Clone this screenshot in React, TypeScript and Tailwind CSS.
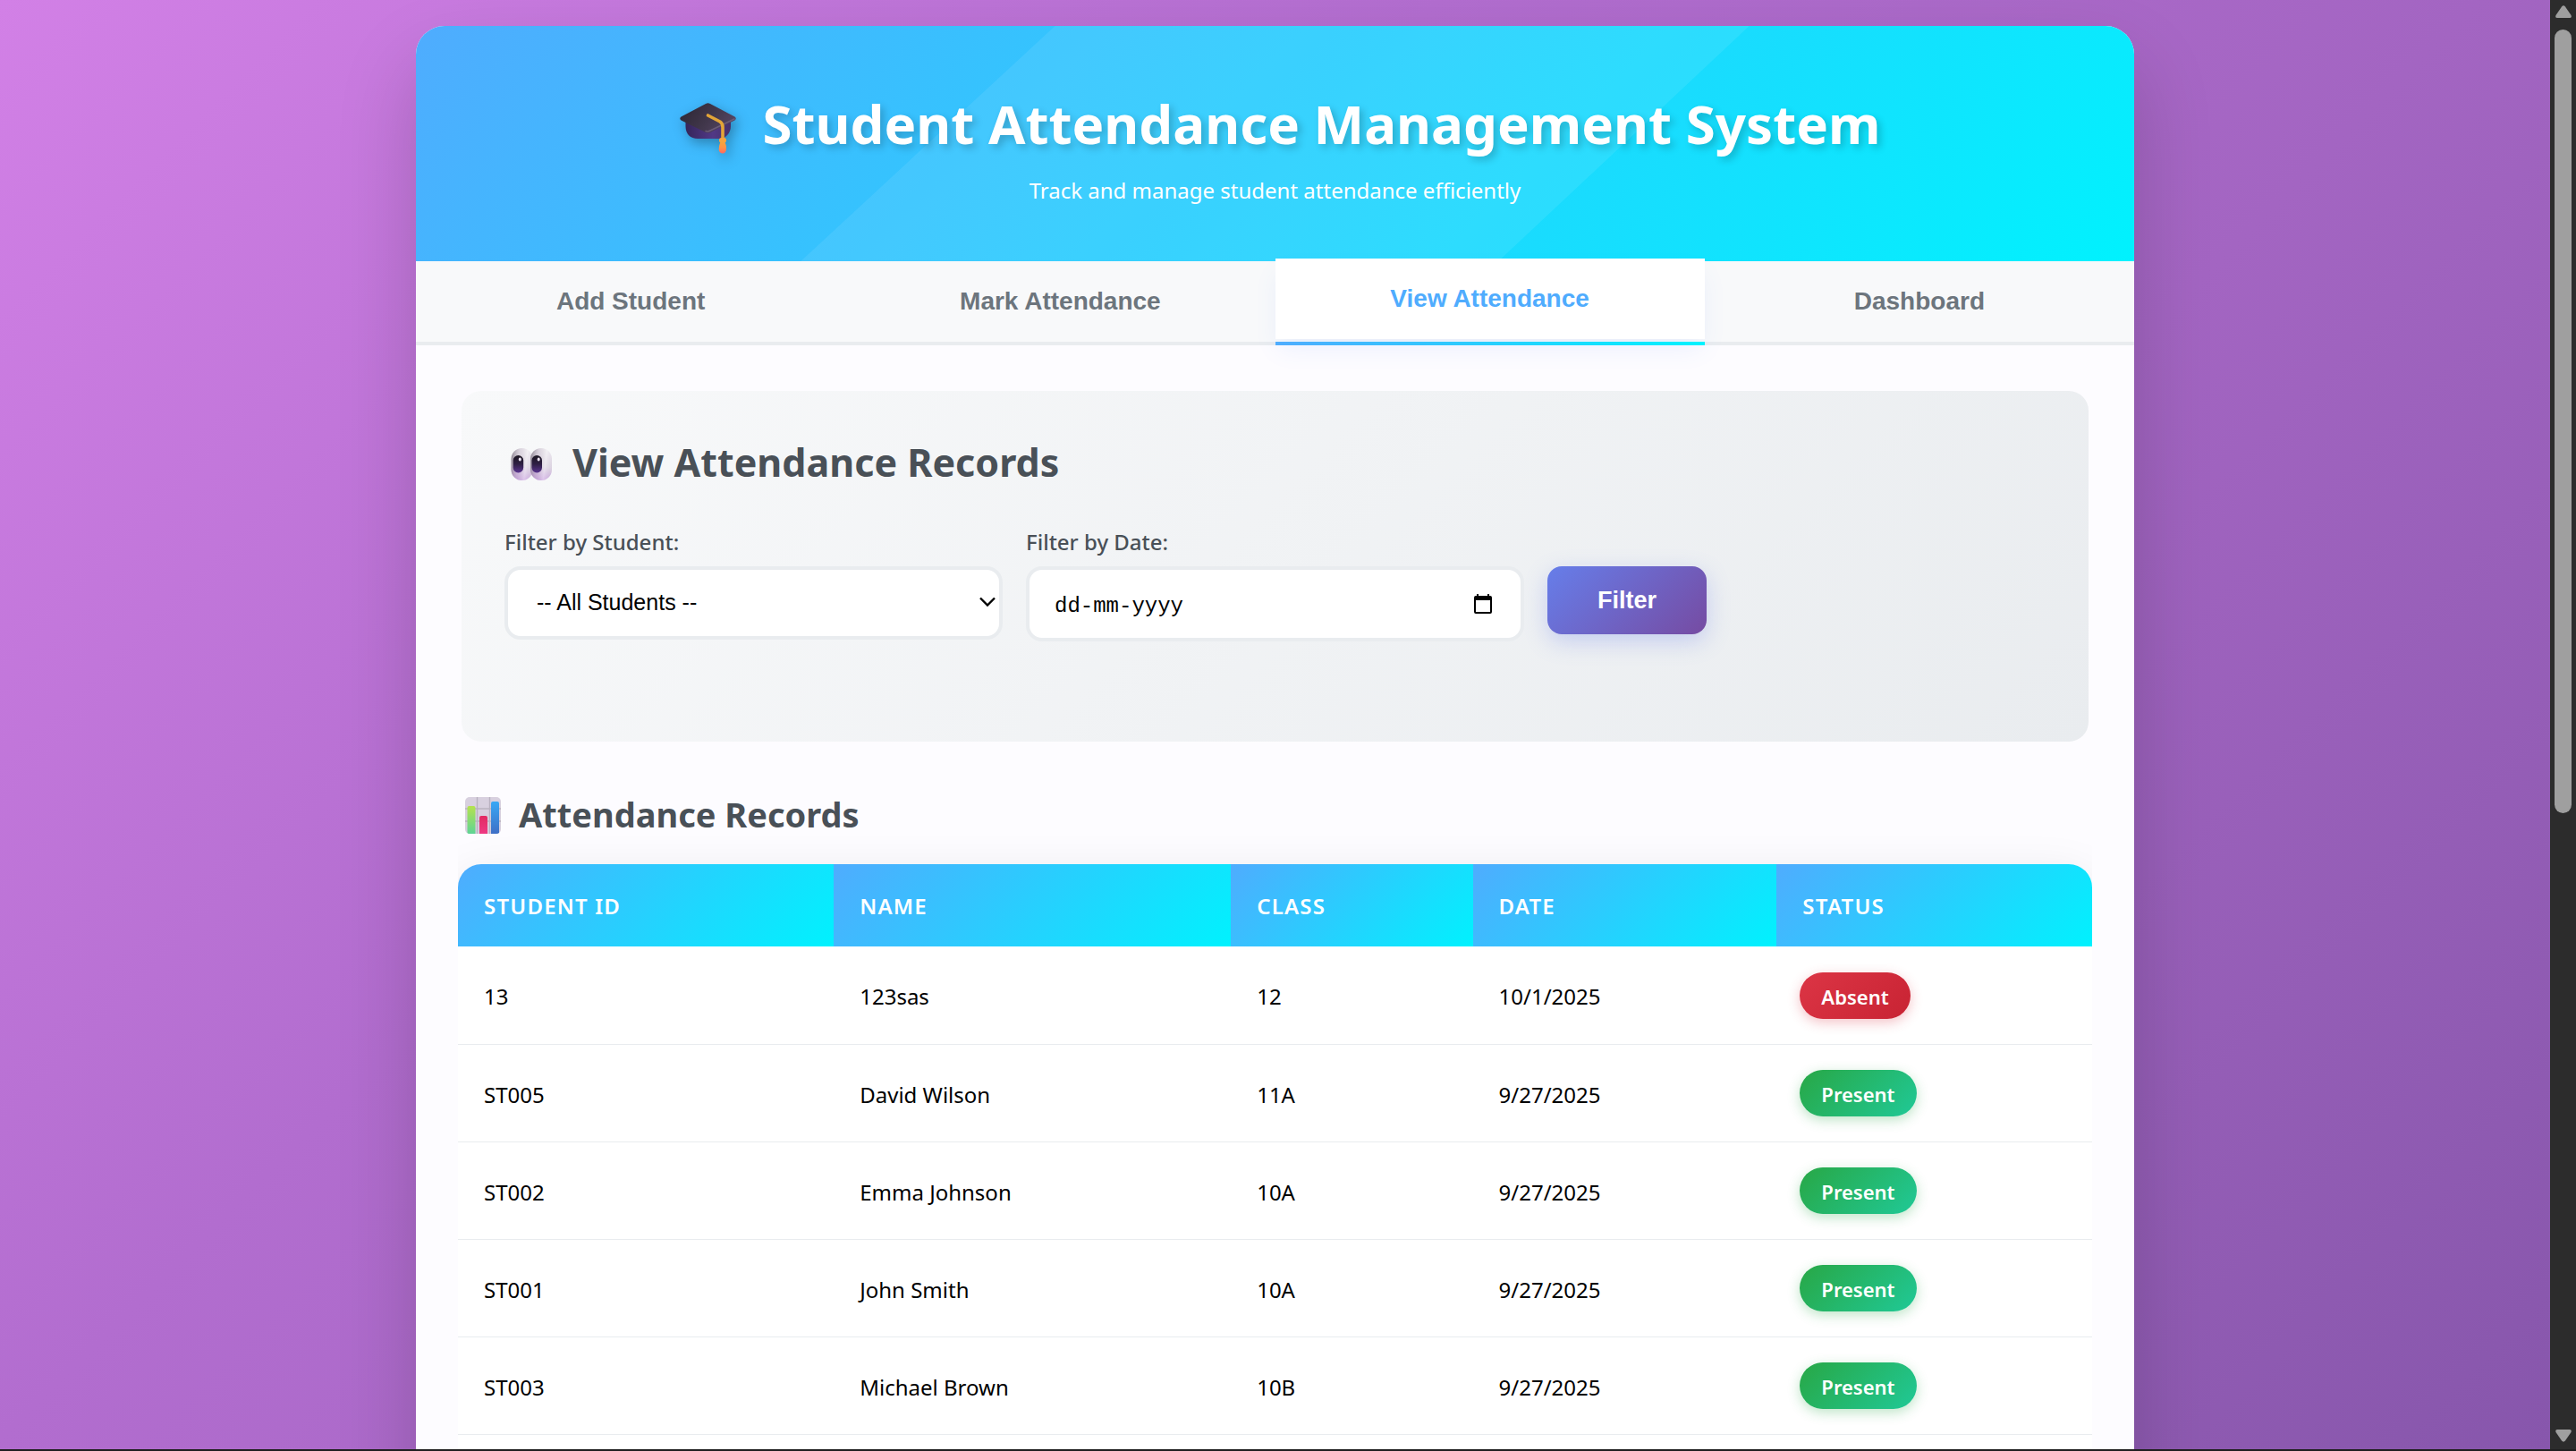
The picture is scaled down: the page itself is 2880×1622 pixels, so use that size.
import React from "react";

type AttendanceRecord = {
  id: string;
  name: string;
  className: string;
  date: string;
  status: "Absent" | "Present";
};

const records: AttendanceRecord[] = [
  { id: "13", name: "123sas", className: "12", date: "10/1/2025", status: "Absent" },
  { id: "ST005", name: "David Wilson", className: "11A", date: "9/27/2025", status: "Present" },
  { id: "ST002", name: "Emma Johnson", className: "10A", date: "9/27/2025", status: "Present" },
  { id: "ST001", name: "John Smith", className: "10A", date: "9/27/2025", status: "Present" },
  { id: "ST003", name: "Michael Brown", className: "10B", date: "9/27/2025", status: "Present" },
];

const tabs = ["Add Student", "Mark Attendance", "View Attendance", "Dashboard"];

const columns = [
  { label: "Student ID", width: "w-[23%]" },
  { label: "Name", width: "w-[24.3%]" },
  { label: "Class", width: "w-[14.8%]" },
  { label: "Date", width: "w-[18.6%]" },
  { label: "Status", width: "w-[19.3%]" },
];

function GraduationCap() {
  return (
    <svg viewBox="-2 0 80 72" className="h-[72px] w-20 shrink-0 drop-shadow-[3px_5px_7px_rgba(0,0,0,0.3)]" aria-hidden="true">
      <defs>
        <linearGradient id="capTop" x1="0" y1="0.3" x2="1" y2="0.7">
          <stop offset="0" stopColor="#2f2836" />
          <stop offset="0.5" stopColor="#40364a" />
          <stop offset="1" stopColor="#564664" />
        </linearGradient>
        <linearGradient id="capBase" x1="0" y1="0" x2="1" y2="0">
          <stop offset="0" stopColor="#35265a" />
          <stop offset="0.6" stopColor="#513886" />
          <stop offset="1" stopColor="#463069" />
        </linearGradient>
        <linearGradient id="tassel" x1="0" y1="0" x2="0" y2="1">
          <stop offset="0" stopColor="#f5a63c" />
          <stop offset="0.5" stopColor="#ff9245" />
          <stop offset="1" stopColor="#ff6a63" />
        </linearGradient>
      </defs>
      <path d="M16.5 30V39C16.5 48 22 53 30 53H54C61 53 67 47 67 39V30Z" fill="url(#capBase)" />
      <path d="M11.5 28.5L39 14Q41.500 12.500 44 14L71.500 28.500Q74 30.500 71.500 32.500L45 45.500Q41.500 47.500 38 45.500L11.500 32.500Q9 30.500 11.500 28.500Z" fill="url(#capTop)" />
      <path d="M39 44.500Q41.500 45.500 44 44L71 31" fill="none" stroke="#6b5b78" strokeWidth="1.500" strokeLinecap="round" />
      <path d="M41.500 27L55 34Q58 36 58 40V56" fill="none" stroke="#e3a537" strokeWidth="3.600" strokeLinecap="round" strokeLinejoin="round" />
      <rect x="54" y="52" width="8" height="5.500" rx="2.500" fill="#f6a43f" />
      <path d="M55.500 56.500H60.500Q62.500 61 62 65.500Q61 69.500 58 69.500Q54.500 69.500 53.700 65.500Q53.500 61 55.500 56.500Z" fill="url(#tassel)" />
    </svg>
  );
}

function Eyes() {
  return (
    <svg viewBox="0 0 60 60" className="size-[60px] shrink-0" aria-hidden="true">
      <defs>
        <linearGradient id="eyeWhite" x1="0.6" y1="0" x2="0.45" y2="1">
          <stop offset="0" stopColor="#ece8ee" />
          <stop offset="0.55" stopColor="#ddd5e2" />
          <stop offset="1" stopColor="#c59add" />
        </linearGradient>
        <linearGradient id="eyeShade" x1="0" y1="0.3" x2="1" y2="0.5">
          <stop offset="0" stopColor="#5c5360" stopOpacity="0.6" />
          <stop offset="0.35" stopColor="#b9aebf" stopOpacity="0.3" />
          <stop offset="0.7" stopColor="#ffffff" stopOpacity="0.4" />
          <stop offset="1" stopColor="#d5cbdc" stopOpacity="0.2" />
        </linearGradient>
        <linearGradient id="pupil" x1="0" y1="0" x2="0" y2="1">
          <stop offset="0" stopColor="#1c1722" />
          <stop offset="0.5" stopColor="#2e1f43" />
          <stop offset="1" stopColor="#5b3590" />
        </linearGradient>
      </defs>
      <rect x="7.500" y="14" width="24" height="36" rx="12" fill="url(#eyeWhite)" />
      <rect x="7.500" y="14" width="24" height="36" rx="12" fill="url(#eyeShade)" />
      <rect x="29" y="14" width="24" height="36" rx="12" fill="url(#eyeWhite)" />
      <rect x="29" y="14" width="24" height="36" rx="12" fill="url(#eyeShade)" />
      <rect x="9.700" y="22" width="11.500" height="19.500" rx="5.700" fill="url(#pupil)" />
      <rect x="30.500" y="22" width="11.500" height="19.500" rx="5.700" fill="url(#pupil)" />
      <ellipse cx="17.300" cy="26.500" rx="1.500" ry="2" fill="#ece4f2" />
      <ellipse cx="38.200" cy="26.500" rx="1.500" ry="2" fill="#ece4f2" />
    </svg>
  );
}

function BarChart() {
  return (
    <svg viewBox="0 0 48 48" className="size-12 shrink-0" aria-hidden="true">
      <defs>
        <linearGradient id="barGreen" x1="0" y1="0" x2="0" y2="1">
          <stop offset="0" stopColor="#b5e24e" />
          <stop offset="1" stopColor="#5ed495" />
        </linearGradient>
        <linearGradient id="barPink" x1="0" y1="0" x2="0" y2="1">
          <stop offset="0" stopColor="#e22a62" />
          <stop offset="1" stopColor="#ee3a84" />
        </linearGradient>
        <linearGradient id="barBlue" x1="0" y1="0" x2="0" y2="1">
          <stop offset="0" stopColor="#37a8f5" />
          <stop offset="1" stopColor="#3f6fc6" />
        </linearGradient>
      </defs>
      <rect x="4" y="5" width="40" height="41" rx="5" fill="#d8d0df" />
      <path d="M17.500 5V46M31.500 5V46M4 18H44M4 32H44" stroke="#b9b2c0" strokeWidth="1.400" />
      <path d="M6.500 46V17Q6.500 15 8.500 15H13.500Q15.500 15 15.500 17V46H9Q6.500 46 6.500 45Z" fill="url(#barGreen)" />
      <path d="M20 46V28Q20 26 22 26H27Q29 26 29 28V46Z" fill="url(#barPink)" />
      <path d="M33 46V12Q33 10 35 10H40Q42 10 42 12V45Q41 46 39 46Z" fill="url(#barBlue)" />
    </svg>
  );
}

function StatusBadge({ status }: { status: AttendanceRecord["status"] }) {
  const tone =
    status === "Absent"
      ? "bg-[linear-gradient(135deg,#dc3545,#c82333)] shadow-[0_4px_14px_rgba(220,53,69,0.3)]"
      : "bg-[linear-gradient(135deg,#28a745,#20c997)] shadow-[0_4px_14px_rgba(40,167,69,0.3)]";
  return (
    <span className={`inline-block rounded-full px-6 pt-3 pb-2.5 align-middle text-[22px] leading-[30px] font-semibold text-white ${tone}`}>
      {status}
    </span>
  );
}

function Header() {
  return (
    <header className="relative rounded-t-[32px] bg-[linear-gradient(135deg,#4facfe_0%,#00f2fe_100%)] pt-16 pb-[59px] text-center text-white">
      <div className="absolute inset-0 bg-white/8 [clip-path:polygon(37.2%_0,77.6%_0,63%_100%,22.4%_100%)]" />
      <div className="relative flex items-center justify-center gap-6">
        <GraduationCap />
        <h1 className="text-[60px] leading-[90px] font-bold [text-shadow:4px_4px_8px_rgba(0,0,0,0.2)]">
          Student Attendance Management System
        </h1>
      </div>
      <p className="relative mt-2.5 text-2xl leading-10">Track and manage student attendance efficiently</p>
    </header>
  );
}

function Tabs() {
  return (
    <nav className="relative grid grid-cols-4 border-b-4 border-[#e9ecef] bg-[#f8f9fa] font-['Liberation_Sans',Arial,sans-serif] text-[28px] font-bold">
      {tabs.map((tab) =>
        tab === "View Attendance" ? (
          <button
            key={tab}
            type="button"
            aria-current="page"
            className="relative h-[90px] -translate-y-[3px] bg-white text-[#4facfe] shadow-[0_14px_26px_-4px_rgba(79,130,254,0.1)]"
          >
            {tab}
            <span className="absolute inset-x-0 -bottom-[7px] h-1 bg-[linear-gradient(90deg,#4facfe,#00f2fe)]" />
          </button>
        ) : (
          <button key={tab} type="button" className="h-[90px] text-[#6c757d]">
            {tab}
          </button>
        )
      )}
    </nav>
  );
}

function FilterPanel() {
  return (
    <section className="rounded-[22px] bg-[linear-gradient(135deg,#f8f9fa_0%,#e9ecef_100%)] px-12 pt-[50px] pb-28 text-[#495057]">
      <h2 className="flex items-center gap-4 text-[43px] leading-[60px] font-bold">
        <Eyes />
        View Attendance Records
      </h2>
      <form className="mt-10 grid grid-cols-3 items-start gap-[26px]">
        <div>
          <label htmlFor="student" className="block text-2xl leading-[38px] font-medium">
            Filter by Student:
          </label>
          <div className="relative mt-2">
            <select
              id="student"
              className="block h-[82px] w-full appearance-none rounded-[18px] border-4 border-[#e9ecef] bg-white pr-10 pl-8 font-['Liberation_Sans',Arial,sans-serif] text-[25px] text-black"
            >
              <option>-- All Students --</option>
            </select>
            <svg viewBox="0 0 18 12" className="pointer-events-none absolute top-[34px] right-2 h-3 w-[18px]" aria-hidden="true">
              <path d="M1 1.500L9 9.500L17 1.500" fill="none" stroke="#000" strokeWidth="2.400" />
            </svg>
          </div>
        </div>
        <div>
          <label htmlFor="date" className="block text-2xl leading-[38px] font-medium">
            Filter by Date:
          </label>
          <div className="relative mt-2">
            <input
              id="date"
              type="text"
              placeholder="dd-mm-yyyy"
              className="block h-[84px] w-full rounded-[18px] border-4 border-[#e9ecef] bg-white pt-1 pr-20 pl-7 font-['Liberation_Mono',monospace] text-2xl text-black placeholder:text-black"
            />
            <svg viewBox="0 0 20 22" className="pointer-events-none absolute top-[31px] right-9 h-[22px] w-5" aria-hidden="true">
              <path
                fillRule="evenodd"
                d="M3 0H5V2H15V0H17V2H18Q20 2 20 4V20Q20 22 18 22H2Q0 22 0 20V4Q0 2 2 2H3ZM2 7V20H18V7Z"
                fill="#000"
              />
            </svg>
          </div>
        </div>
        <button
          type="button"
          className="mt-[46px] h-[76px] w-[178px] rounded-[16px] bg-[linear-gradient(135deg,#667eea_0%,#764ba2_100%)] font-['Liberation_Sans',Arial,sans-serif] text-[27px] font-bold text-white shadow-[0_8px_26px_rgba(102,126,234,0.3)]"
        >
          Filter
        </button>
      </form>
    </section>
  );
}

function RecordsTable() {
  return (
    <div className="-mx-1 mt-7 [clip-path:inset(-60px_0_0_0)]">
      <div className="overflow-hidden rounded-t-[26px] bg-white pb-16 shadow-[0_14px_52px_rgba(0,0,0,0.1)]">
        <table className="w-full table-fixed border-collapse text-left text-2xl leading-[50px] text-black">
          <thead>
            <tr className="h-[92px]">
              {columns.map((column) => (
                <th
                  key={column.label}
                  scope="col"
                  className={`${column.width} bg-[linear-gradient(135deg,#4facfe_0%,#00f2fe_100%)] px-[29px] pt-0.5 pb-0 font-semibold tracking-wider text-white uppercase`}
                >
                  {column.label}
                </th>
              ))}
            </tr>
          </thead>
          <tbody>
            {records.map((record) => (
              <tr key={record.id} className="h-[109px] border-b border-[#e9ecef]">
                <td className="px-[29px] pt-1 pb-0">{record.id}</td>
                <td className="px-[29px] pt-1 pb-0">{record.name}</td>
                <td className="px-[29px] pt-1 pb-0">{record.className}</td>
                <td className="px-[29px] pt-1 pb-0">{record.date}</td>
                <td className="px-[26px] py-0">
                  <StatusBadge status={record.status} />
                </td>
              </tr>
            ))}
          </tbody>
        </table>
      </div>
    </div>
  );
}

function Scrollbar() {
  return (
    <div className="flex w-[29px] shrink-0 flex-col items-center bg-[#2c2c2c] pt-1.5 pb-2" aria-hidden="true">
      <svg viewBox="0 0 18 14" className="h-3.5 w-[18px] shrink-0">
        <path d="M7 1.500Q9 -0.800 11 1.500L17.500 11Q18.500 14 16 14H2Q-0.500 14 0.500 11Z" fill="#9f9f9f" />
      </svg>
      <div className="min-h-0 w-full flex-1 px-[5px] pt-[13px]">
        <div className="h-[56%] rounded-full bg-[#9f9f9f]" />
      </div>
      <svg viewBox="0 0 18 14" className="h-3.5 w-[18px] shrink-0">
        <path d="M7 12.500Q9 14.800 11 12.500L17.500 3Q18.500 0 16 0H2Q-0.500 0 0.500 3Z" fill="#9f9f9f" />
      </svg>
    </div>
  );
}

export default function App() {
  return (
    <div className="flex h-screen overflow-hidden border-b-2 border-[#1f1f1f] font-['Noto_Sans','Open_Sans',sans-serif]">
      <main className="h-full min-w-0 flex-1 overflow-hidden bg-[linear-gradient(135deg,#d280e6_0%,#b26dcf_36%,#a365c2_62%,#8a58ae_96%,#8756ac_100%)] pt-[29px]">
        <div className="mx-auto w-full max-w-[1921px] rounded-[32px] bg-[#fdfcff] pb-24 shadow-[0_44px_88px_rgba(0,0,0,0.18)]">
          <Header />
          <Tabs />
          <div className="px-[51px] pt-[51px]">
            <FilterPanel />
            <section className="mt-[53px]">
              <h3 className="flex items-center gap-4 text-[38px] leading-[56px] font-bold text-[#495057]">
                <BarChart />
                Attendance Records
              </h3>
              <RecordsTable />
            </section>
          </div>
        </div>
      </main>
      <Scrollbar />
    </div>
  );
}
